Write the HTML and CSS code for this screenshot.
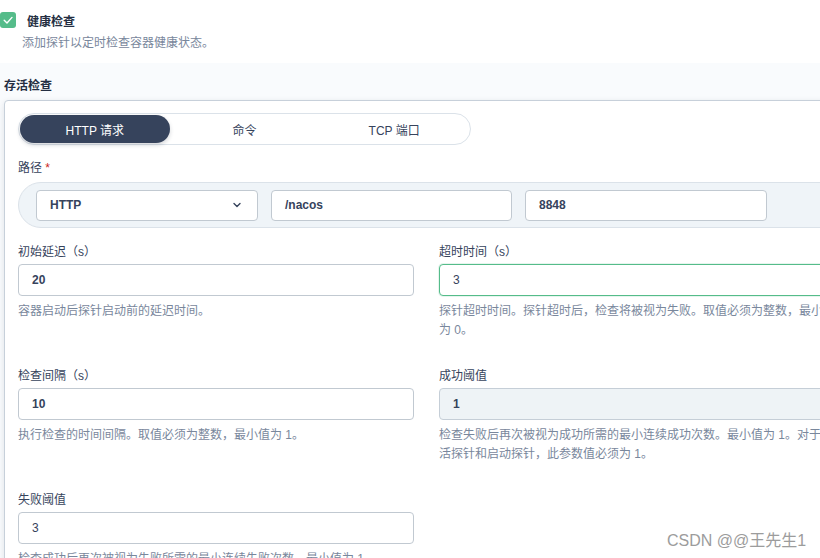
FILE: index.html
```html
<!DOCTYPE html>
<html lang="zh">
<head>
<meta charset="utf-8">
<title>健康检查</title>
<link rel="stylesheet" href="styles.css">
</head>
<body>
<div class="page">
  <div class="health">
    <span class="checkbox">
      <svg width="12" height="12" viewBox="0 0 12 12"><path d="M2.2 6.2 L5 9 L10 3.4" fill="none" stroke="#fff" stroke-width="1.4" stroke-linecap="round" stroke-linejoin="round"/></svg>
    </span>
    <div class="health-text">
      <div class="health-title">健康检查</div>
      <div class="health-desc">添加探针以定时检查容器健康状态。</div>
    </div>
  </div>
  <div class="section">
    <div class="section-title">存活检查</div>
    <div class="card">
      <div class="tabs">
        <div class="tab active">HTTP 请求</div>
        <div class="tab">命令</div>
        <div class="tab">TCP 端口</div>
      </div>
      <div class="label path-label">路径 <span class="req">*</span></div>
      <div class="path-row">
        <div class="field select">
          <span>HTTP</span>
          <svg width="12" height="12" viewBox="0 0 12 12"><path d="M3 4.6 L6 7.6 L9 4.6" fill="none" stroke="#36435c" stroke-width="1.4" stroke-linecap="round" stroke-linejoin="round"/></svg>
        </div>
        <div class="field path-input">/nacos</div>
        <div class="field port-input">8848</div>
      </div>
      <div class="grid">
        <div class="item">
          <div class="label">初始延迟（s）</div>
          <div class="field">20</div>
          <div class="help">容器启动后探针启动前的延迟时间。</div>
        </div>
        <div class="item">
          <div class="label">超时时间（s）</div>
          <div class="field focused light">3</div>
          <div class="help">探针超时时间。探针超时后，检查将被视为失败。取值必须为整数，最小值为 0。</div>
        </div>
        <div class="item">
          <div class="label">检查间隔（s）</div>
          <div class="field">10</div>
          <div class="help">执行检查的时间间隔。取值必须为整数，最小值为 1。</div>
        </div>
        <div class="item">
          <div class="label">成功阈值</div>
          <div class="field disabled">1</div>
          <div class="help">检查失败后再次被视为成功所需的最小连续成功次数。最小值为 1。对于存活探针和启动探针，此参数值必须为 1。</div>
        </div>
        <div class="item">
          <div class="label">失败阈值</div>
          <div class="field light">3</div>
          <div class="help">检查成功后再次被视为失败所需的最小连续失败次数。最小值为 1。</div>
        </div>
      </div>
    </div>
  </div>
  <div class="watermark">CSDN @@王先生1</div>
</div>
</body>
</html>
```
FILE: styles.css
```css
* { box-sizing: border-box; }
html, body { margin: 0; padding: 0; }
body {
  width: 820px;
  height: 558px;
  overflow: hidden;
  background: #ffffff;
  font-family: "Liberation Sans", "Noto Sans CJK SC", sans-serif;
  color: #36435c;
  font-size: 12px;
}
.page { position: relative; width: 820px; height: 558px; overflow: hidden; }

.health {
  display: flex;
  align-items: flex-start;
  padding-top: 13px;
  height: 63px;
}
.checkbox {
  width: 16px;
  height: 16px;
  margin-top: -1px;
  border-radius: 3px;
  background: #55bc8a;
  display: flex;
  align-items: center;
  justify-content: center;
  flex: none;
}
.health-text { margin-left: 6px; }
.health-title {
  font-weight: bold;
  font-size: 12px;
  line-height: 18px;
  margin-left: 5px;
  color: #242e42;
}
.health-desc {
  margin-top: 4px;
  font-size: 12px;
  line-height: 16px;
  color: #79879c;
}

.section {
  background: #f9fbfd;
  height: 495px;
  padding-left: 4px;
  padding-top: 14px;
}
.section-title {
  font-weight: bold;
  font-size: 12px;
  line-height: 18px;
  color: #242e42;
  margin-bottom: 5px;
}
.card {
  width: 860px;
  height: 600px;
  background: #ffffff;
  border: 1px solid #c7d0da;
  border-radius: 4px 0 0 0;
  box-shadow: 0 2px 6px rgba(36, 46, 66, 0.12);
  padding: 12px 0 0 13px;
}

.tabs {
  display: flex;
  width: 453px;
  height: 32px;
  padding: 1px;
  border: 1px solid #dbe2e9;
  border-radius: 16px;
  background: #ffffff;
}
.tab {
  width: 150px;
  height: 28px;
  border-radius: 14px;
  display: flex;
  align-items: center;
  justify-content: center;
  font-size: 12px;
  color: #36435c;
}
.tab.active {
  background: #36435c;
  color: #ffffff;
  box-shadow: 0 2px 4px rgba(36, 46, 66, 0.2);
}

.label {
  font-size: 12px;
  line-height: 18px;
  color: #36435c;
  margin-bottom: 6px;
}
.path-label { margin-top: 14px; margin-bottom: 5px; }
.req { color: #ca2621; }

.path-row {
  display: flex;
  gap: 13px;
  align-items: center;
  width: 840px;
  height: 46px;
  padding-left: 17px;
  background: #eff4f8;
  border: 1px solid #dbe2e9;
  border-radius: 23px 0 0 23px;
}
.field {
  height: 32px;
  border: 1px solid #c1c9d1;
  border-radius: 4px;
  background: #ffffff;
  display: flex;
  align-items: center;
  padding-left: 13px;
  font-weight: bold;
  font-size: 12px;
  color: #36435c;
}
.field.light { font-weight: normal; }
.path-row .field { height: 31px; }
.select { width: 222px; justify-content: space-between; padding-right: 14px; }
.path-input { width: 241px; }
.port-input { width: 242px; }

.grid {
  margin-top: 15px;
  display: grid;
  grid-template-columns: 396px 396px;
  column-gap: 25px;
  row-gap: 27px;
}
.grid .label { margin-bottom: 3px; }
.item .field { width: 396px; }
.field.focused {
  border-color: #55bc8a;
  box-shadow: 0 0 0 1px rgba(85, 188, 138, 0.15);
}
.field.disabled {
  background: #eef3f6;
  border-color: #c5ced7;
}
.help {
  margin-top: 6px;
  font-size: 12px;
  line-height: 19px;
  color: #79879c;
}

.watermark {
  position: absolute;
  left: 667px;
  top: 531px;
  font-family: "Liberation Sans", "Noto Sans CJK SC", sans-serif;
  font-size: 16px;
  line-height: 20px;
  color: #9c9c9c;
  text-shadow: 0 0 2px #ffffff, 0 0 2px #ffffff;
}
```
